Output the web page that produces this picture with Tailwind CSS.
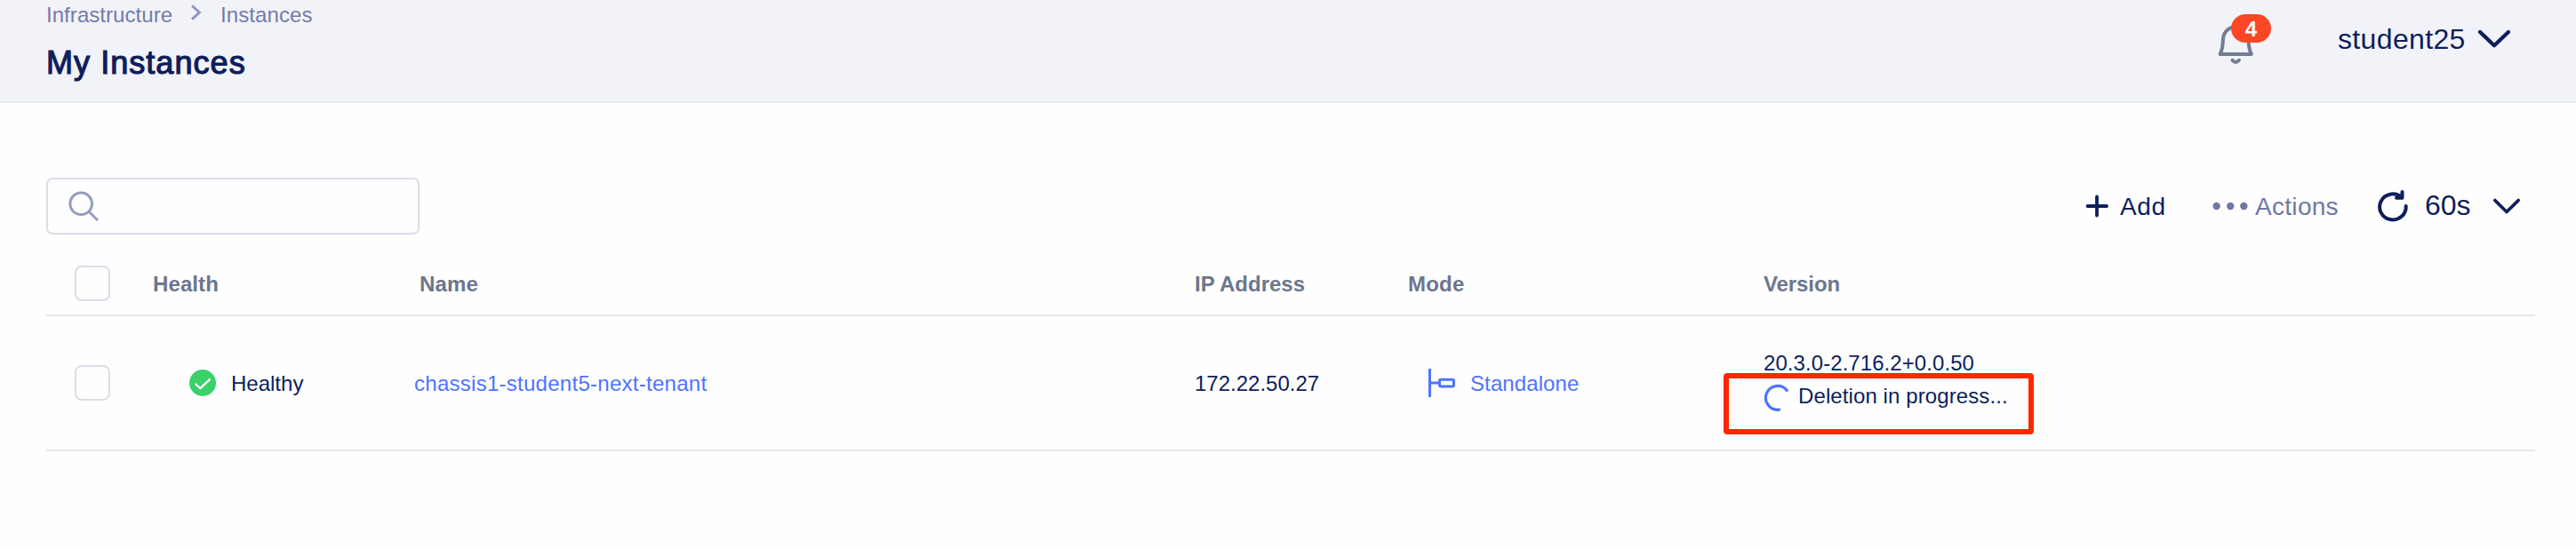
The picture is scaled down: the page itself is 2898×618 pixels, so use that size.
<!DOCTYPE html>
<html lang="en">
<head>
<meta charset="utf-8">
<title>My Instances</title>
<script src="https://cdn.jsdelivr.net/npm/@tailwindcss/browser@4"></script>
</head>
<body class="h-[618px] w-[2898px] overflow-hidden bg-[#fefefe] font-['Liberation_Sans',Arial,sans-serif] text-[24px] leading-[27px] text-[#0e1e5b]">
  <header class="flex h-[116px] items-start justify-between border-b-2 border-[#e6e8f3] bg-[#f2f3f9] pl-[52px] pr-[74px]">
    <div class="pt-[3px]">
      <nav class="flex h-[27px] items-start text-[#737ca6]">
        <a class="w-[163px] tracking-[0.05px]">Infrastructure</a>
        <svg class="mt-[1px] h-5 w-[12px]" viewBox="0 0 12 20" fill="none" stroke="#8f97bb" stroke-width="3"><path d="M1 2.300 9.300 10 1 17.700"/></svg>
        <a class="ml-[21px] tracking-[0.1px]">Instances</a>
      </nav>
      <h1 class="mt-5 text-[36px] font-normal leading-[41px] tracking-[1.05px] [-webkit-text-stroke:1.2px_#0e1e5b]">My Instances</h1>
    </div>
    <div class="flex items-start">
      <div class="relative mt-[16px] h-[58px] w-[62px]">
        <svg class="absolute left-0 top-0 h-[58px] w-[42px]" viewBox="2494 16 42 58" fill="none" stroke="#727c92" stroke-width="4" stroke-linecap="round" stroke-linejoin="round"><path d="M2515 30.500C2505.500 30.500 2500.800 38 2500.800 46C2500.600 54 2499.500 57 2497.600 61H2532.800C2530.800 57 2529.800 54 2529.600 46C2529.600 38 2525 30.500 2515 30.500ZM2511.500 67.800Q2515.300 72 2519 67.800"/></svg>
        <span class="absolute left-[16px] top-0 h-8 w-[45px] rounded-full bg-[#fc4726] pt-[3px] text-center font-bold text-white">4</span>
      </div>
      <span class="ml-[74px] mt-[26px] w-[157px] text-[32px] leading-9 tracking-[0.35px]">student25</span>
      <svg class="mt-[30px] h-[26px] w-[37px]" viewBox="2787 30 37 26" fill="none" stroke="#0e1e5b" stroke-width="4.300" stroke-linecap="round" stroke-linejoin="round"><path d="M2790 36 2806 51.300 2822 36"/></svg>
    </div>
  </header>

  <main class="pl-[52px] pr-[46px] pt-[84px]">
    <div class="flex h-16 items-start justify-between">
      <div class="h-16 w-[420px] rounded-[7px] border-2 border-[#dadde6] pl-[22px] pt-[12px]">
        <svg class="h-9 w-9" viewBox="76 214 36 36" fill="none" stroke="#959cbf" stroke-width="3"><circle cx="91.200" cy="229.300" r="12.300"/><path d="M99.800 238 110 248"/></svg>
      </div>
      <div class="flex h-16 w-[506px] items-start text-[28px] leading-[31px]">
        <svg class="mt-[18px] h-7 w-7" viewBox="2346 218 28 28" fill="none" stroke="#0e1e5b" stroke-width="3.800" stroke-linecap="round"><path d="M2348.500 232H2370M2359 221.500V242.500"/></svg>
        <span class="ml-[11px] mt-[17px] w-[103px] tracking-[0.6px]">Add</span>
        <svg class="mt-[26px] h-3 w-[49px]" viewBox="2488 226 49 12" fill="#6f79a3"><circle cx="2493.600" cy="232" r="4.200"/><circle cx="2509.200" cy="232" r="4.200"/><circle cx="2524.300" cy="232" r="4.200"/></svg>
        <span class="mt-[17px] w-[136px] tracking-[0.3px] text-[#6f79a3]">Actions</span>
        <svg class="mt-[12px] h-10 w-[40px]" viewBox="2673 212 40 40" fill="none" stroke="#0e1e5b" stroke-width="4" stroke-linecap="round" stroke-linejoin="round"><path d="M2701.500 221.800A14.800 14.500 0 1 0 2706.700 232M2702.500 216V222.800H2696"/></svg>
        <span class="ml-[15px] mt-[13px] w-[75px] text-[32px] leading-9">60s</span>
        <svg class="mt-[20px] h-6 w-[34px]" viewBox="2803 220 34 24" fill="none" stroke="#0e1e5b" stroke-width="3.700" stroke-linecap="round" stroke-linejoin="round"><path d="M2806.800 225.500 2820 238.500 2833.200 225.500"/></svg>
      </div>
    </div>

    <section>
      <div class="grid h-[92px] grid-cols-[120px_300px_872px_240px_400px_868px] items-start border-b-2 border-[#e7e7ee] font-bold text-[#6c768d]">
        <span class="ml-8 mt-[35px] size-10 rounded-[8px] border-2 border-[#dadde6]"></span>
        <span class="mt-[42px] tracking-[0.1px]">Health</span>
        <span class="mt-[42px] tracking-[0.2px]">Name</span>
        <span class="mt-[42px]">IP Address</span>
        <span class="mt-[42px] tracking-[0.2px]">Mode</span>
        <span class="mt-[42px] tracking-[-0.1px]">Version</span>
      </div>
      <div class="grid h-[152px] grid-cols-[120px_300px_872px_240px_400px_868px] items-start border-b-2 border-[#e7e7ee]">
        <span class="ml-8 mt-[55px] size-10 rounded-[8px] border-2 border-[#dadde6]"></span>
        <div class="flex items-start pl-[41px]">
          <svg class="mt-[60px] size-[30px]" viewBox="0 0 30 30" fill="none"><circle cx="15" cy="15" r="15" fill="#39d169"/><path d="M7.300 16.500 12.300 21.200 23 11.200" stroke="#fff" stroke-width="2.300" stroke-linecap="round" stroke-linejoin="round"/></svg>
          <span class="ml-[17px] mt-[62px]">Healthy</span>
        </div>
        <a class="-ml-1.5 mt-[62px] tracking-[0.27px] text-[#4f73ff]">chassis1-student5-next-tenant</a>
        <span class="mt-[62px]">172.22.50.27</span>
        <div class="flex items-start pl-[22px] text-[#4f73ff]">
          <svg class="mt-[58px] h-9 w-8" viewBox="1606 414 32 36" fill="none" stroke="currentColor" stroke-width="3"><path d="M1608.500 415V447M1608.500 431H1619"/><rect x="1619.500" y="427.300" width="16" height="7.600" rx="1.500"/></svg>
          <span class="ml-[16px] mt-[62px] tracking-[0.1px]">Standalone</span>
        </div>
        <div class="relative pt-[39px]">
          <div class="tracking-[0.07px]">20.3.0-2.716.2+0.0.50</div>
          <div class="mt-[10px] flex items-start">
            <svg class="h-8 w-8" viewBox="1984 432 32 32" fill="none" stroke="#4f73ff" stroke-width="3.200" stroke-linecap="round"><path d="M2010.300 439.500A13.400 13.400 0 1 0 2001.500 461.200"/></svg>
            <span class="ml-[7px] tracking-[0.1px]">Deletion in progress...</span>
          </div>
          <div class="absolute left-[-45px] top-[64px] h-[69px] w-[349px] rounded-[4px] border-[6px] border-[#ff2600]"></div>
        </div>
      </div>
    </section>
  </main>
</body>
</html>
